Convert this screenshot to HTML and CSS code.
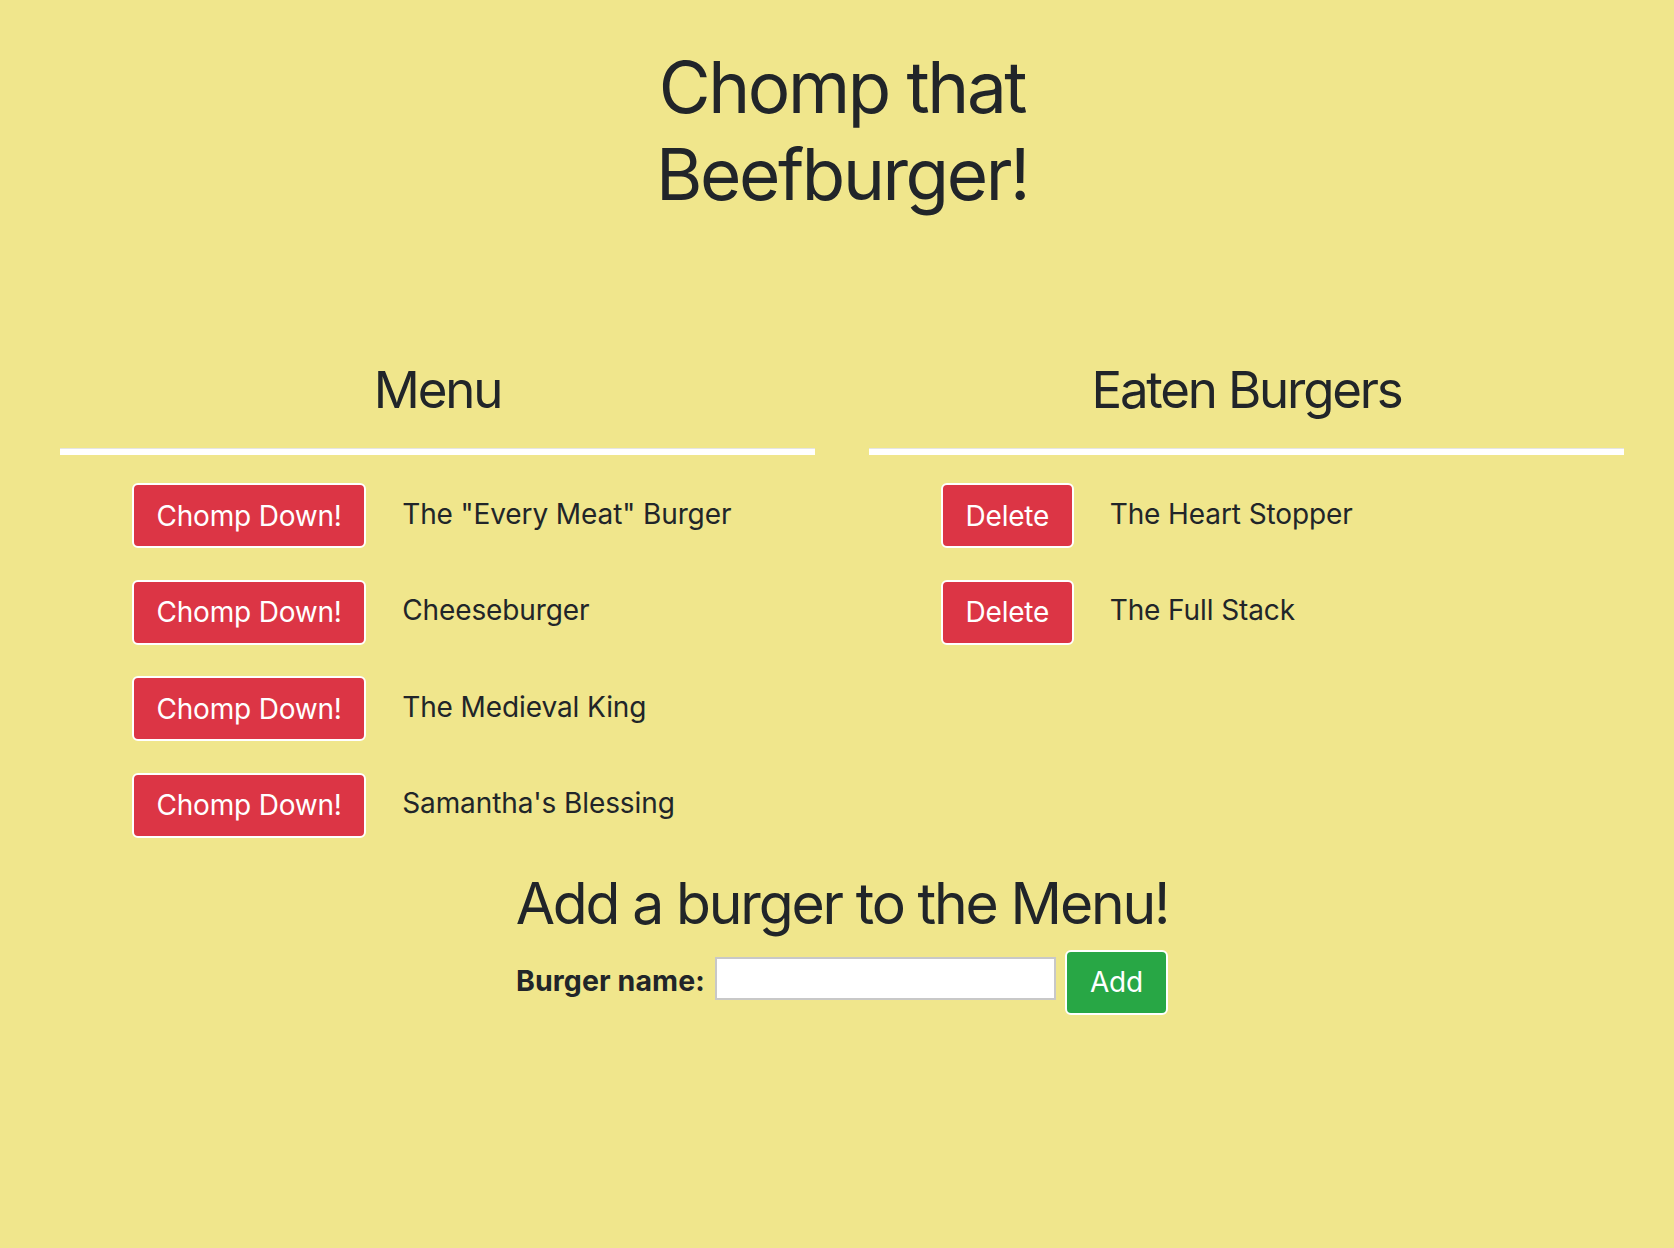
FILE: index.html
```html
<!DOCTYPE html>
<html lang="en">
<head>
<meta charset="utf-8">
<title>Chomp that Beefburger!</title>
<link rel="stylesheet" href="styles.css">
</head>
<body>
<div class="page">
  <h1 class="title">Chomp that Beefburger!</h1>
  <div class="columns">
    <section class="col">
      <h2 class="col-head">Menu</h2>
      <hr class="rule">
      <ul class="list">
        <li class="item"><button class="btn btn-red">Chomp Down!</button><span class="name">The "Every Meat" Burger</span></li>
        <li class="item"><button class="btn btn-red">Chomp Down!</button><span class="name">Cheeseburger</span></li>
        <li class="item"><button class="btn btn-red">Chomp Down!</button><span class="name">The Medieval King</span></li>
        <li class="item"><button class="btn btn-red">Chomp Down!</button><span class="name">Samantha's Blessing</span></li>
      </ul>
    </section>
    <section class="col">
      <h2 class="col-head">Eaten Burgers</h2>
      <hr class="rule">
      <ul class="list">
        <li class="item"><button class="btn btn-red">Delete</button><span class="name">The Heart Stopper</span></li>
        <li class="item"><button class="btn btn-red">Delete</button><span class="name">The Full Stack</span></li>
      </ul>
    </section>
  </div>
  <h2 class="add-head">Add a burger to the Menu!</h2>
  <form class="add-form">
    <label class="label" for="burger">Burger name:</label>
    <input class="input" id="burger" type="text">
    <button class="btn btn-green" type="button">Add</button>
  </form>
</div>
</body>
</html>
```
FILE: styles.css
```css
html, body {
  margin: 0;
  padding: 0;
  background: #f0e68c;
}
body {
  font-family: Inter, "Noto Sans", "Liberation Sans", sans-serif;
  color: #212529;
  min-height: 1248px;
}
.page {
  padding: 44px 50px 0 60px;
  display: flex;
  flex-direction: column;
  align-items: stretch;
}
.title {
  margin: 0 auto;
  width: 420px;
  text-align: center;
  font-size: 71px;
  line-height: 86.5px;
  font-weight: 400;
  letter-spacing: -2.4px;
}
.columns {
  margin-top: 142px;
  display: grid;
  grid-template-columns: 1fr 1fr;
  column-gap: 54px;
}
.col-head {
  margin: 0;
  text-align: center;
  font-size: 51px;
  line-height: 61px;
  font-weight: 400;
  letter-spacing: -2.2px;
}
.rule {
  margin: 28px 0 0;
  border: 0;
  border-top: 1px solid rgba(0, 0, 0, 0.1);
  height: 6px;
  background: #fff;
}
.list {
  list-style: none;
  margin: 28px 0 0;
  padding: 0 0 0 72px;
  display: flex;
  flex-direction: column;
  gap: 31.5px;
}
.item {
  display: flex;
  align-items: center;
  gap: 36px;
}
.btn {
  font-family: Inter, "Noto Sans", "Liberation Sans", sans-serif;
  font-size: 28px;
  line-height: 1;
  height: 65px;
  padding: 0 22.5px;
  border: 2px solid #fff;
  border-radius: 6px;
  color: #fff;
  cursor: pointer;
  letter-spacing: -0.2px;
}
.btn-red {
  background: #dc3545;
}
.btn-green {
  background: #28a745;
  padding: 0 23px;
}
.name {
  font-size: 28px;
  line-height: 1;
  padding-bottom: 4px;
  letter-spacing: -0.1px;
}
.add-head {
  margin: 31px 0 0;
  text-align: center;
  font-size: 57px;
  line-height: 69px;
  font-weight: 400;
  letter-spacing: -2.15px;
}
.add-form {
  margin-top: 12px;
  display: flex;
  justify-content: center;
  align-items: center;
}
.label {
  font-size: 28.5px;
  font-weight: 700;
  margin-right: 10px;
  margin-top: -4px;
  letter-spacing: 0.1px;
}
.input {
  box-sizing: border-box;
  width: 341px;
  height: 43px;
  border: 2px solid #c8c8c8;
  background: #fff;
  margin: -7px 9px 0 0;
  padding: 0 6px;
  font-size: 20px;
}
```
